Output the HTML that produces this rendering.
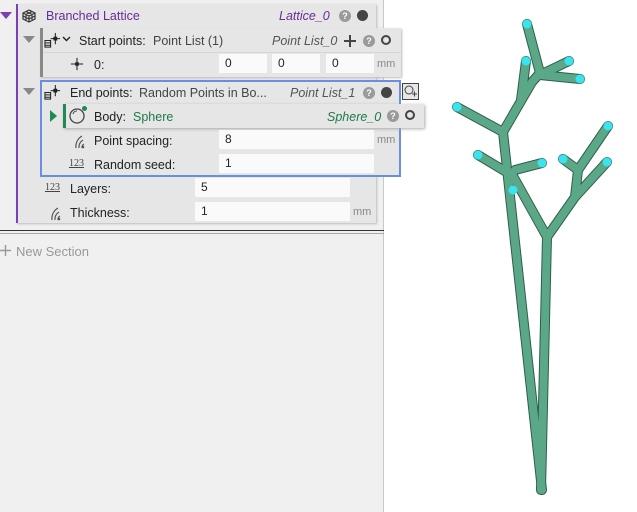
<!DOCTYPE html>
<html><head><meta charset="utf-8"><style>
*{margin:0;padding:0;box-sizing:border-box}
body{width:637px;height:512px;background:#fff;font-family:"Liberation Sans",sans-serif;font-size:12px;color:#222;position:relative;overflow:hidden}
.a{position:absolute;white-space:nowrap}
.f{position:absolute;background:#fafafa;height:19px;line-height:19px;padding-left:6px;font-size:12px}
.mm{position:absolute;color:#888;font-size:11px}
.it{font-style:italic;color:#555}
.q{position:absolute;width:12px;height:12px;border-radius:50%;background:#9a9a9a;color:#fff;font-size:9px;font-weight:bold;text-align:center;line-height:12px}
.dot{position:absolute;width:11px;height:11px;border-radius:50%;background:#444}
.ring{position:absolute;width:10px;height:10px;border-radius:50%;border:2px solid #444}
.tri{position:absolute;width:0;height:0;border-left:6px solid transparent;border-right:6px solid transparent;border-top:7px solid #888}
.n123{position:absolute;font-family:"Liberation Serif",serif;font-size:10px;text-decoration:underline;color:#444}
</style></head><body>
<svg width="0" height="0" style="position:absolute"><defs>
<symbol id="wv" viewBox="0 0 16 16"><g fill="none" stroke="#555" stroke-width="1.2"><path d="M7 15 A12 12 0 0 1 13 3"/><path d="M10 15 A8 8 0 0 1 14 7"/><path d="M13 15 A4 4 0 0 1 15 11"/></g><circle cx="14" cy="14" r="1.3" fill="#555"/></symbol>
<symbol id="pt" viewBox="0 0 16 16"><g stroke="#222" stroke-width="1.2"><path d="M1 8 H15 M8 1 V15"/></g><rect x="6" y="6" width="4" height="4" fill="#222"/></symbol>
<symbol id="pl" viewBox="0 0 18 18"><g stroke="#222" stroke-width="1.1" fill="none"><rect x="1" y="9" width="6" height="7"/><path d="M1 11.5 H7 M1 14 H7"/><path d="M7 7 H17 M12 1 V13"/></g><rect x="10" y="5" width="4" height="4" fill="#222"/></symbol>
</defs></svg>
<div class="a" style="left:0;top:0;width:384px;height:512px;background:#f0f0f0;border-right:1px solid #c8c8c8"></div>
<!-- lattice card -->
<div class="a" style="left:16px;top:4px;width:360px;height:219px;background:#e6e6e6;border-left:2px solid #7a3fb0;box-shadow:1px 1px 2px #bbb"></div>
<div class="a" style="left:0;top:12px;width:0;height:0;border-left:6px solid transparent;border-right:6px solid transparent;border-top:7px solid #7a3fb0"></div>
<svg class="a" style="left:21px;top:8px" width="16" height="16" viewBox="0 0 16 16" fill="none" stroke="#333" stroke-width="1.2"><path d="M2 5 L8 2 L14 5 L14 11 L8 14 L2 11Z M2 5 L8 8 L14 5 M8 8 V14 M5 3.5 L11 6.5 V12.5 M11 3.5 L5 6.5 V12.5 M2 8 L8 11 L14 8"/></svg>
<div class="a" style="left:46px;top:9px;color:#6a2a9a;font-size:12.5px">Branched Lattice</div>
<div class="a it" style="left:279px;top:9px;color:#6a2a9a;font-size:12.5px">Lattice_0</div>
<div class="q" style="left:339px;top:10px">?</div>
<div class="dot" style="left:357px;top:10px"></div>
<!-- start points -->
<div class="tri" style="left:23px;top:36px"></div>
<div class="a" style="left:40px;top:28px;width:361px;height:49px;background:#e6e6e6;border-left:3px solid #888;box-shadow:1px 1px 2px #bbb"></div>
<div class="a" style="left:43px;top:52px;width:358px;height:1px;background:#d6d6d6"></div>
<svg class="a" style="left:44px;top:32px" width="17" height="17"><use href="#pl"/></svg>
<svg class="a" style="left:62px;top:36px" width="9" height="6"><path d="M1 1 L4.5 4.5 L8 1" stroke="#222" stroke-width="1.4" fill="none"/></svg>
<div class="a" style="left:79px;top:34px;font-size:12.5px">Start points:</div>
<div class="a" style="left:153px;top:34px;color:#444;font-size:12.5px">Point List (1)</div>
<div class="a it" style="left:272px;top:34px;font-size:12.5px">Point List_0</div>
<svg class="a" style="left:344px;top:35px" width="12" height="12"><path d="M6 0 V12 M0 6 H12" stroke="#444" stroke-width="2"/></svg>
<div class="q" style="left:363px;top:35px">?</div>
<div class="ring" style="left:381px;top:35px"></div>
<svg class="a" style="left:70px;top:57px" width="14" height="14"><use href="#pt"/></svg>
<div class="a" style="left:94px;top:58px;font-size:12.5px">0:</div>
<div class="f" style="left:219px;top:54px;width:48px">0</div>
<div class="f" style="left:272px;top:54px;width:48px">0</div>
<div class="f" style="left:326px;top:54px;width:48px">0</div>
<div class="mm" style="left:377px;top:58px">mm</div>
<!-- end points -->
<div class="tri" style="left:23px;top:88px"></div>
<div class="a" style="left:40px;top:80px;width:361px;height:97px;background:#e6e6e6;border:2px solid #6a8fe0"></div>
<svg class="a" style="left:44px;top:84px" width="17" height="17"><use href="#pl"/></svg>
<div class="a" style="left:70px;top:86px;font-size:12.5px">End points:</div>
<div class="a" style="left:139px;top:86px;color:#444;font-size:12.5px">Random Points in Bo...</div>
<div class="a it" style="left:290px;top:86px;font-size:12.5px">Point List_1</div>
<div class="q" style="left:363px;top:87px">?</div>
<div class="dot" style="left:381px;top:87px"></div>
<svg class="a" style="left:402px;top:83px" width="17" height="17"><rect x="0.5" y="0.5" width="16" height="16" fill="#e6e6e6" stroke="#444"/><circle cx="7" cy="7" r="4" fill="none" stroke="#444"/><path d="M10 11 H15 M12.5 8.5 V13.5" stroke="#444"/></svg>
<!-- body -->
<div class="a" style="left:50px;top:110px;width:0;height:0;border-top:6px solid transparent;border-bottom:6px solid transparent;border-left:7px solid #1f8a52"></div>
<div class="a" style="left:63px;top:104px;width:361px;height:24px;background:#e6e6e6;border-left:3px solid #1f8a52;box-shadow:1px 1px 3px #aaa"></div>
<svg class="a" style="left:69px;top:106px" width="18" height="18"><circle cx="8" cy="10" r="7" fill="none" stroke="#444" stroke-width="1.3"/><path d="M4 8 A4 4 0 0 1 8 5" stroke="#444" fill="none"/><circle cx="15.5" cy="2.5" r="2.5" fill="#1f8a52"/></svg>
<div class="a" style="left:94px;top:110px;font-size:12.5px">Body:</div>
<div class="a" style="left:133px;top:110px;color:#1f7a4a;font-size:12.5px">Sphere</div>
<div class="a it" style="left:327px;top:110px;color:#1f7a4a;font-size:12.5px">Sphere_0</div>
<div class="q" style="left:387px;top:110px">?</div>
<div class="ring" style="left:405px;top:110px"></div>
<svg class="a" style="left:69px;top:133px" width="16" height="16"><use href="#wv"/></svg>
<div class="a" style="left:94px;top:134px;font-size:12.5px">Point spacing:</div>
<div class="f" style="left:219px;top:130px;width:155px">8</div>
<div class="mm" style="left:377px;top:134px">mm</div>
<div class="n123" style="left:69px;top:158px">123</div>
<div class="a" style="left:94px;top:158px;font-size:12.5px">Random seed:</div>
<div class="f" style="left:219px;top:154px;width:155px">1</div>
<!-- layers -->
<div class="n123" style="left:45px;top:182px">123</div>
<div class="a" style="left:70px;top:182px;font-size:12.5px">Layers:</div>
<div class="f" style="left:195px;top:178px;width:155px">5</div>
<svg class="a" style="left:45px;top:205px" width="16" height="16"><use href="#wv"/></svg>
<div class="a" style="left:70px;top:206px;font-size:12.5px">Thickness:</div>
<div class="f" style="left:195px;top:202px;width:155px">1</div>
<div class="mm" style="left:353px;top:206px">mm</div>
<div class="a" style="left:0;top:230px;width:384px;height:1px;background:#333"></div>
<div class="a" style="left:0;top:233px;width:384px;height:1px;background:#aaa"></div>
<svg class="a" style="left:0;top:245px" width="11" height="11"><path d="M5.5 0 V11 M0 5.5 H11" stroke="#999" stroke-width="1.4"/></svg>
<div class="a" style="left:16px;top:244px;color:#999;font-size:13px">New Section</div>
<!-- lattice -->
<svg class="a" style="left:0;top:0" width="637" height="512">
<g stroke-linecap="round" stroke-linejoin="round" fill="none">
<g stroke="#2e5e4a" stroke-width="10">
<path d="M527 24 L540 73 M569 61 L540 75 M580 79 L540 75 M540 73 L532 82 L503 132 M526 61 L521 100 M457 107 L503 132 L542 490 M478 155 L513 176 L547 237 L541 490 M542 163 L515 170 M547 237 L575 197 L607 162 M608 126 L578 170 L575 197 M563 159 L578 170"/>
</g>
<g stroke="#5ba889" stroke-width="8">
<path d="M527 24 L540 73 M569 61 L540 75 M580 79 L540 75 M540 73 L532 82 L503 132 M526 61 L521 100 M457 107 L503 132 L542 490 M478 155 L513 176 L547 237 L541 490 M542 163 L515 170 M547 237 L575 197 L607 162 M608 126 L578 170 L575 197 M563 159 L578 170"/>
</g>
</g>
<g fill="#3be3ee">
<circle cx="527" cy="24" r="4.5"/><circle cx="526" cy="61" r="4.5"/><circle cx="569" cy="61" r="4.5"/><circle cx="580" cy="79" r="4.5"/><circle cx="457" cy="107" r="4.5"/><circle cx="608" cy="126" r="4.5"/><circle cx="478" cy="155" r="4.5"/><circle cx="542" cy="163" r="4.5"/><circle cx="563" cy="159" r="4.5"/><circle cx="607" cy="162" r="4.5"/><circle cx="513" cy="190" r="4.5"/>
</g>
</svg>
</body></html>
